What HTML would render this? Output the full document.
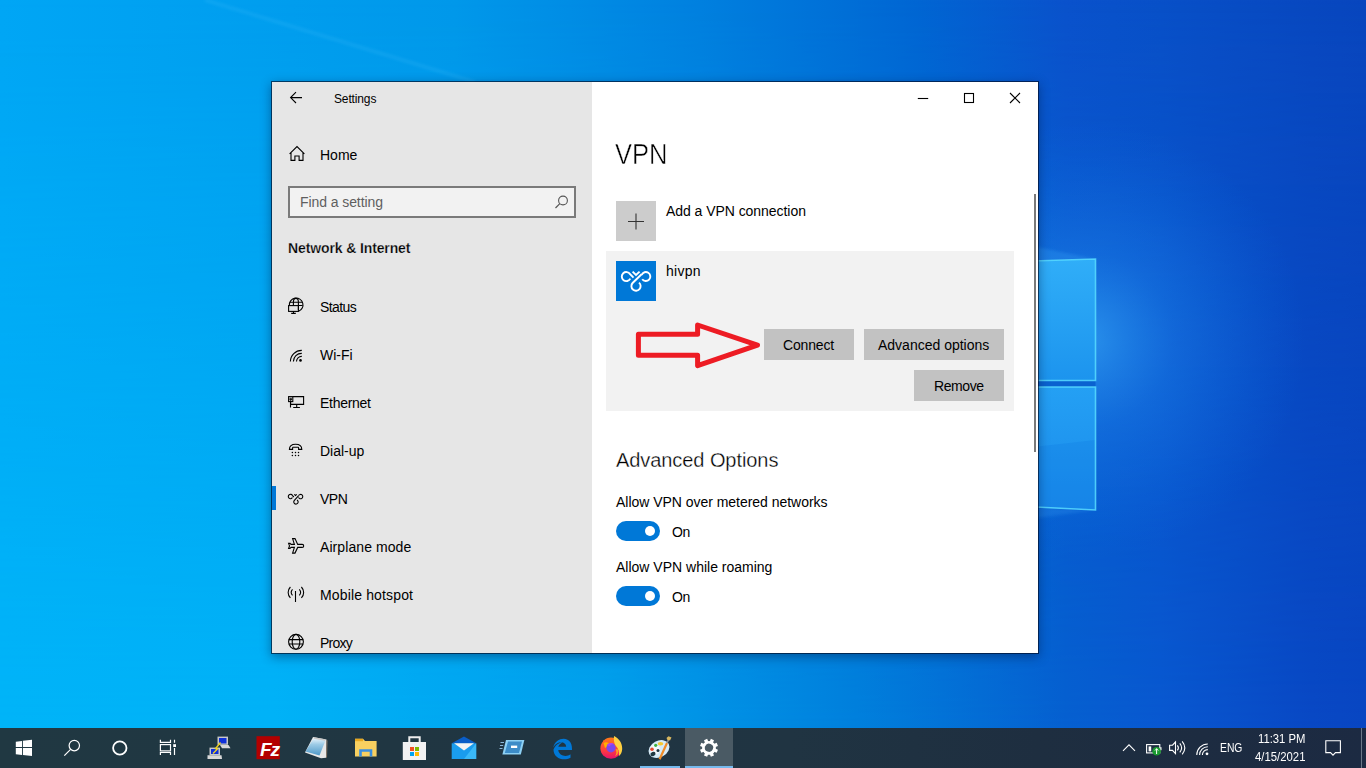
<!DOCTYPE html>
<html><head><meta charset="utf-8">
<style>
*{margin:0;padding:0;box-sizing:border-box}
html,body{width:1366px;height:768px;overflow:hidden}
body{position:relative;font-family:"Liberation Sans",sans-serif;color:#000;background:#0a8fe0}
.a{position:absolute}
svg{position:absolute;overflow:visible}
.t{position:absolute;white-space:nowrap;line-height:1;font-size:14px}
.s{font-size:12px;color:#fff}
#win{position:absolute;left:271px;top:81px;width:768px;height:573px;border:1px solid rgba(0,8,30,.62);background:#fff;background-clip:padding-box;box-shadow:0 3px 10px rgba(0,20,60,.42)}
#left{position:absolute;left:272px;top:82px;width:320px;height:571px;background:#e6e6e6}
#taskbar{position:absolute;left:0;top:728px;width:1366px;height:40px;background:linear-gradient(90deg,#203842 0%,#203442 58%,#1e2e40 76%,#1c2a42 100%)}
.btn{position:absolute;background:#c2c2c2;height:31px}
.tog{position:absolute;width:44px;height:20px;border-radius:10px;background:#0078d7}
.tog:after{content:"";position:absolute;left:29px;top:5px;width:10px;height:10px;border-radius:5px;background:#fff}
.ic{fill:none;stroke:#000;stroke-width:1.1}
.wi{fill:none;stroke:#fff;stroke-width:1.3}
</style></head>
<body>
<svg id="wall" style="left:0;top:0" width="1366" height="728" viewBox="0 0 1366 728">
 <defs>
  <linearGradient id="gtop" x1="0" y1="0" x2="1366" y2="0" gradientUnits="userSpaceOnUse">
   <stop offset="0" stop-color="#00a6f5"/><stop offset=".333" stop-color="#0098ea"/><stop offset=".5" stop-color="#0082e0"/>
   <stop offset=".66" stop-color="#0068d4"/><stop offset=".78" stop-color="#0a52cc"/><stop offset=".85" stop-color="#0850c8"/><stop offset=".96" stop-color="#0848c0"/><stop offset="1" stop-color="#0846be"/>
  </linearGradient>
  <linearGradient id="gbot" x1="0" y1="0" x2="1366" y2="0" gradientUnits="userSpaceOnUse">
   <stop offset="0" stop-color="#00b4f8"/><stop offset=".2" stop-color="#00b2f7"/><stop offset=".44" stop-color="#00a0ec"/><stop offset=".626" stop-color="#0080dc"/>
   <stop offset=".78" stop-color="#0560d0"/><stop offset=".85" stop-color="#0858d0"/><stop offset=".96" stop-color="#0848c4"/><stop offset="1" stop-color="#0846c2"/>
  </linearGradient>
  <linearGradient id="vm" x1="0" y1="0" x2="0" y2="1">
   <stop offset="0" stop-color="#fff" stop-opacity="0"/><stop offset="1" stop-color="#fff" stop-opacity="1"/>
  </linearGradient>
  <mask id="mk"><rect width="1366" height="728" fill="url(#vm)"/></mask>
  <radialGradient id="glow" cx="1085" cy="340" r="220" gradientUnits="userSpaceOnUse">
   <stop offset="0" stop-color="#40b8ff" stop-opacity=".6"/><stop offset=".4" stop-color="#2898f8" stop-opacity=".3"/><stop offset="1" stop-color="#1080f0" stop-opacity="0"/>
  </radialGradient>
  <linearGradient id="pane" x1="0" y1="0" x2="0" y2="1">
   <stop offset="0" stop-color="#30aef8"/><stop offset="1" stop-color="#1c94ee"/>
  </linearGradient>
  <linearGradient id="pane2" x1="0" y1="0" x2="0" y2="1">
   <stop offset="0" stop-color="#24a0f4"/><stop offset="1" stop-color="#1a8aea"/>
  </linearGradient>
  <filter id="bl" x="-20%" y="-20%" width="140%" height="140%"><feGaussianBlur stdDeviation="1.5"/></filter>
 </defs>
 <rect width="1366" height="728" fill="url(#gtop)"/>
 <rect width="1366" height="728" fill="url(#gbot)" mask="url(#mk)"/>
 <rect width="1366" height="728" fill="url(#glow)"/>
 <path d="M205 0 L475 82" stroke="#60d0ff" stroke-opacity=".16" stroke-width="3" filter="url(#bl)"/>
 <polygon points="880,215 1095.5,259 880,268" fill="#40b8ff" fill-opacity=".22" filter="url(#bl)"/>
 <polygon points="880,500 1095.5,510 880,540" fill="#40b8ff" fill-opacity=".18" filter="url(#bl)"/>
 <polygon points="900,265 1095.5,259 1095.5,380.5 900,380.5" fill="url(#pane)"/>
 <polygon points="900,387 1095.5,387 1095.5,510 900,500" fill="url(#pane2)"/>
 <polygon points="900,462 1095.5,440 1095.5,510 900,500" fill="#0a70e0" fill-opacity=".22"/>
 <path d="M900 380.5 H1095.5 V387 H900 Z" fill="#0a62d0"/>
 <path d="M900 265 L1095.5 259 V380.5 H900 M900 387 H1095.5 V510 L900 500" fill="none" stroke="#58dcff" stroke-opacity=".85" stroke-width="1.6"/>
</svg>

<div id="win"></div>
<div id="left"></div>

<!-- title bar -->
<svg style="left:284px;top:85px" width="24" height="24" viewBox="0 0 24 24"><path class="ic" d="M12 7.2 L6.6 12.6 L12 18 M6.6 12.6 H18"/></svg>
<div class="t m" style="left:334px;top:93px;font-size:12px;letter-spacing:-0.14px">Settings</div>
<svg style="left:912px;top:85px" width="24" height="24" viewBox="0 0 24 24"><path class="ic" d="M5.8 13.5 H16.2" stroke-width="1"/></svg>
<svg style="left:957px;top:85px" width="24" height="24" viewBox="0 0 24 24"><rect class="ic" x="7.5" y="8.5" width="9" height="9" stroke-width="1"/></svg>
<svg style="left:1003px;top:85px" width="24" height="24" viewBox="0 0 24 24"><path class="ic" d="M7 8 L17 18 M17 8 L7 18" stroke-width="1"/></svg>

<!-- home -->
<svg style="left:284px;top:142px" width="24" height="24" viewBox="0 0 24 24"><path class="ic" d="M5.6 11.8 L13 4.5 L20.4 11.8 M7 10.6 V18.4 H10.9 V14 H15.1 V18.4 H19 V10.6"/></svg>
<div class="t m" style="left:320px;top:148px">Home</div>

<!-- search -->
<div class="a" style="left:288px;top:186px;width:288px;height:32px;border:2px solid #7a7a7a;background:#f2f2f2"></div>
<div class="t m" style="left:300px;top:195px;color:#5f5f5f;letter-spacing:-0.08px">Find a setting</div>
<svg style="left:552px;top:192px" width="18" height="18" viewBox="0 0 18 18"><circle cx="11" cy="8.5" r="4.4" fill="none" stroke="#555" stroke-width="1.1"/><path d="M7.8 11.7 L3.5 16" stroke="#555" stroke-width="1.2"/></svg>

<div class="t m" style="left:288px;top:241px;font-weight:bold;letter-spacing:-0.12px;-webkit-text-stroke:.25px #e6e6e6">Network &amp; Internet</div>

<!-- nav icons -->
<svg style="left:284px;top:294px" width="24" height="24" viewBox="0 0 24 24"><g class="ic">
 <path d="M14.6 17.2 A6.8 6.8 0 1 0 5.4 11.4"/>
 <path d="M5.6 8.2 H18.6 M14.6 11.5 H18.6 M9.4 11.4 V8 C9.4 4.8 10.5 4.4 11.9 4.4 C13.3 4.4 14.4 4.8 14.4 8 V16"/>
 <rect x="4.6" y="11.6" width="9.8" height="5.8"/>
 <path d="M9.5 17.4 V19.4 M7.2 19.4 H11.8"/></g></svg>
<div class="t m" style="left:320px;top:300px;letter-spacing:-0.6px">Status</div>

<svg style="left:284px;top:342px" width="24" height="24" viewBox="0 0 24 24"><g class="ic">
 <path d="M6.4 19.6 A11.2 11.2 0 0 1 17.8 8.4"/>
 <path d="M9.4 19.6 A8.2 8.2 0 0 1 17.8 11.4"/>
 <path d="M12.5 19.6 A5.1 5.1 0 0 1 17.8 14.4"/></g>
 <circle cx="16.5" cy="18.4" r="1.3" fill="#000"/></svg>
<div class="t m" style="left:320px;top:348px">Wi-Fi</div>

<svg style="left:284px;top:390px" width="24" height="24" viewBox="0 0 24 24"><g class="ic">
 <path d="M8.8 6.6 H19.6 V14.4 H6.6 V11.6"/>
 <rect x="4.6" y="6.6" width="4.2" height="5"/>
 <path d="M5.6 8.2 H7.8 M5.6 9.2 L6.7 10.3 L7.8 9.2 M6.5 11.6 V17.6 M12.7 14.4 V17.4 M9.2 17.5 H15.9"/></g></svg>
<div class="t m" style="left:320px;top:396px;letter-spacing:-0.28px">Ethernet</div>

<svg style="left:284px;top:438px" width="24" height="24" viewBox="0 0 24 24"><g class="ic" stroke-width="1.2">
 <path d="M5.4 11.4 C5.4 7.6 8.4 6.2 11.6 6.2 C14.8 6.2 17.8 7.6 17.8 11.4 H14.6 V9.9 C14.6 9.5 14.4 9.3 14 9.3 H9.2 C8.8 9.3 8.6 9.5 8.6 9.9 V11.4 Z"/></g>
 <g fill="#000"><circle cx="8.4" cy="14.4" r="0.75"/><circle cx="11.5" cy="14.4" r="0.75"/><circle cx="14.5" cy="14.4" r="0.75"/><circle cx="8.4" cy="17.4" r="0.75"/><circle cx="11.5" cy="17.4" r="0.75"/><circle cx="14.5" cy="17.4" r="0.75"/></g></svg>
<div class="t m" style="left:320px;top:444px">Dial-up</div>

<div class="a" style="left:272px;top:486px;width:4px;height:24px;background:#0078d7"></div>
<svg style="left:284px;top:486px" width="24" height="24" viewBox="0 0 24 24"><g class="ic" stroke-width="1.05">
 <path d="M8.4 11.6 A2.2 2.2 0 1 1 8.5 9.6 L9.9 11"/><path d="M14.6 9.6 A2.2 2.2 0 1 1 14.5 11.4"/><path d="M14.6 9.6 L10.2 14.6 A2.2 2.2 0 1 0 13 14"/>
 <path d="M10.3 8.3 L11.5 9.5 L12.7 8.3"/></g></svg>
<div class="t m" style="left:320px;top:492px;letter-spacing:-0.5px">VPN</div>

<svg style="left:284px;top:534px" width="24" height="24" viewBox="0 0 24 24"><g class="ic" stroke-width="1.2">
 <path d="M8.6 4.6 H11 L13.7 10.4 H18.2 C19.2 10.4 19.7 11.1 19.7 11.9 C19.7 12.7 19.2 13.4 18.2 13.4 H13.7 L11 19.1 H8.6 L10.4 13.4 H7.1 L6 14.4 H4.6 L5.5 11.9 L4.6 9.4 H6 L7.1 10.4 H10.4 Z"/></g></svg>
<div class="t m" style="left:320px;top:540px;letter-spacing:0.08px">Airplane mode</div>

<svg style="left:284px;top:582px" width="24" height="24" viewBox="0 0 24 24"><g class="ic" stroke-width="1.2">
 <path d="M6.4 5 C3.4 8.2 3.4 12.6 6.4 15.8 M17.4 5 C20.4 8.2 20.4 12.6 17.4 15.8 M8.5 7.4 C6.9 9.2 6.9 11.6 8.5 13.4 M15.3 7.4 C16.9 9.2 16.9 11.6 15.3 13.4 M11.5 9 V20"/></g></svg>
<div class="t m" style="left:320px;top:588px;letter-spacing:0.15px">Mobile hotspot</div>

<svg style="left:284px;top:630px" width="24" height="24" viewBox="0 0 24 24"><g class="ic" stroke-width="1.2">
 <circle cx="12" cy="11.8" r="7.4"/><ellipse cx="12" cy="11.8" rx="3.8" ry="7.4"/><path d="M4.8 9.6 H19.2 M4.8 14 H19.2"/></g></svg>
<div class="t m" style="left:320px;top:636px;letter-spacing:-0.75px">Proxy</div>

<!-- right pane -->
<div class="t m" style="left:615px;top:140px;font-size:29px;transform:scaleX(.88);transform-origin:0 0;-webkit-text-stroke:.5px #fff">VPN</div>
<div class="a" style="left:616px;top:201px;width:40px;height:40px;background:#cccccc"></div>
<svg style="left:616px;top:201px" width="40" height="40" viewBox="0 0 40 40"><path d="M20 12.5 V28.5 M12 20.5 H28" stroke="#333" stroke-width="1.1"/></svg>
<div class="t m" style="left:666px;top:204px;letter-spacing:-0.05px">Add a VPN connection</div>

<div class="a" style="left:606px;top:251px;width:408px;height:160px;background:#f2f2f2"></div>
<div class="a" style="left:616px;top:261px;width:40px;height:40px;background:#0078d7"></div>
<svg style="left:612px;top:257px" width="48" height="48" viewBox="0 0 48 48"><g fill="none" stroke="#fff" stroke-width="1.9">
 <path d="M18.3 21.6 A4.5 4.5 0 1 1 18.1 17.2 L21.5 20.6"/>
 <path d="M29.7 17.8 A4.5 4.5 0 1 1 30.2 22.2 M29.6 17.3 L20.6 26 A4.6 4.6 0 1 0 27 25.6"/>
 <path d="M20.6 14.6 L24 18 L27.6 14.6"/></g></svg>
<div class="t m" style="left:666px;top:264px;letter-spacing:0.25px">hivpn</div>

<div class="btn" style="left:764px;top:329px;width:90px"></div>
<div class="t m" style="left:783px;top:338px;letter-spacing:-0.17px">Connect</div>
<div class="btn" style="left:864px;top:329px;width:140px"></div>
<div class="t m" style="left:878px;top:338px">Advanced options</div>
<div class="btn" style="left:914px;top:370px;width:90px"></div>
<div class="t m" style="left:934px;top:379px;letter-spacing:-0.4px">Remove</div>

<svg style="left:0;top:0" width="1366" height="768"><path d="M638.4 334.3 H697.6 V325 L757.5 345.2 L697.6 365.7 V355.2 H638.4 Z" fill="none" stroke="#ed1c24" stroke-width="5" stroke-linejoin="round"/></svg>

<div class="t m" style="left:616px;top:450px;font-size:20px;-webkit-text-stroke:.3px #fff;letter-spacing:-0.07px">Advanced Options</div>
<div class="t m" style="left:616px;top:495px;letter-spacing:-0.03px">Allow VPN over metered networks</div>
<div class="tog" style="left:616px;top:521px"></div>
<div class="t m" style="left:672px;top:525px;letter-spacing:-0.4px">On</div>
<div class="t m" style="left:616px;top:560px">Allow VPN while roaming</div>
<div class="tog" style="left:616px;top:586px"></div>
<div class="t m" style="left:672px;top:590px;letter-spacing:-0.4px">On</div>
<div class="a" style="left:1034px;top:194px;width:2px;height:258px;background:#7a7a7a"></div>

<!-- taskbar -->
<div id="taskbar"></div>
<div class="a" style="left:685px;top:728px;width:48px;height:40px;background:#4a5a64"></div>
<div class="a" style="left:685px;top:766px;width:48px;height:2px;background:#76b9ed"></div>
<div class="a" style="left:640px;top:766px;width:40px;height:2px;background:#76b9ed"></div>
<svg style="left:0;top:728px" width="1366" height="40" viewBox="0 0 1366 40">
 <!-- start -->
 <g fill="#fff">
  <polygon points="15.8,13.8 22,12.9 22,18.9 15.8,18.9"/>
  <polygon points="22.9,12.7 32,11.8 32,18.9 22.9,18.9"/>
  <polygon points="15.8,20 22,20 22,27 15.8,26.2"/>
  <polygon points="22.9,20 32,20 32,28 22.9,27.1"/>
 </g>
 <!-- search -->
 <g fill="none" stroke="#fff" stroke-width="1.2">
  <circle cx="74.3" cy="17.6" r="5.2"/><path d="M70.6 21.3 L64.3 27.6"/>
 </g>
 <!-- cortana -->
 <circle cx="119.8" cy="20" r="6.7" fill="none" stroke="#fff" stroke-width="1.8"/>
 <!-- task view -->
 <g fill="none" stroke="#fff" stroke-width="1.2">
  <path d="M160.4 11.8 V14.3 H170.5 V11.8"/>
  <rect x="160.4" y="16.6" width="10.1" height="6.3"/>
  <path d="M160.4 27.1 V24.5 H170.5 V27.1"/>
  <path d="M174.5 11.8 V14.8 M174.5 20 V27.1"/>
 </g>
 <rect x="173.2" y="16.2" width="2.8" height="2.8" fill="#fff"/>
 <!-- network pcs -->
 <g>
  <rect x="217.5" y="8.6" width="10.5" height="8.2" fill="#c8c8c8"/><rect x="219" y="10" width="7.5" height="5.5" fill="#1030d8"/>
  <polygon points="220,17 228.5,17 230.5,20.3 222,20.3" fill="#d8d8d8"/>
  <rect x="209.5" y="19.6" width="10.5" height="7.6" fill="#c8c8c8"/><rect x="211" y="21" width="7.5" height="5" fill="#1030d8"/>
  <polygon points="207.5,27.2 221.5,27.2 222,31 207.5,31" fill="#d8d8d8"/>
  <path d="M220.5 14.5 L215.5 20.5 L217.5 21 L213 25.5" fill="none" stroke="#f0d020" stroke-width="1.4"/>
 </g>
 <!-- filezilla -->
 <rect x="256.5" y="8.2" width="23.3" height="23" fill="#b30000"/>
 <text x="260" y="28" font-family="Liberation Sans" font-weight="bold" font-style="italic" font-size="19" fill="#fff" letter-spacing="-1">Fz</text>
 <!-- notepad -->
 <defs>
  <linearGradient id="npg" x1="0" y1="0" x2="0" y2="1"><stop offset="0" stop-color="#e4f2fa"/><stop offset=".35" stop-color="#9ccbe6"/><stop offset="1" stop-color="#4e98c8"/></linearGradient>
  <linearGradient id="ffg" x1="0" y1="0" x2="0" y2="1"><stop offset="0" stop-color="#ff7a18"/><stop offset=".6" stop-color="#ff3d3d"/><stop offset="1" stop-color="#e6106e"/></linearGradient>
 </defs>
 <polygon points="313,9 326.5,11.5 326,29.8 321,30.2 305,24.5" fill="#e8e8e8"/>
 <polygon points="326.5,12 327.5,12.5 327,29.5 326,29.8" fill="#8a7a6a"/>
 <polygon points="313.5,10.5 325.5,12.5 319.5,27.5 305.5,23.5" fill="url(#npg)"/>
 <path d="M314 10 L325 12" stroke="#c8c8c8" stroke-width="1.4"/>
 <!-- folder -->
 <polygon points="355,10.8 363,10.8 365,13 376.6,13 376.6,28.6 355,28.6" fill="#f8d060"/>
 <rect x="355" y="10.8" width="8" height="2.4" fill="#e8a820"/>
 <path d="M360.5 28.6 V22.5 H371 V28.6" fill="none" stroke="#3a8ee0" stroke-width="2.6"/>
 <!-- store -->
 <path d="M409.3 14 V9.2 H419.7 V14" fill="none" stroke="#eee" stroke-width="2"/>
 <rect x="402.8" y="14" width="23.2" height="18" fill="#f2f2f2"/>
 <rect x="410" y="19" width="4" height="4" fill="#f25022"/><rect x="415" y="19" width="4" height="4" fill="#7fba00"/>
 <rect x="410" y="24" width="4" height="4" fill="#00a4ef"/><rect x="415" y="24" width="4" height="4" fill="#ffb900"/>
 <!-- mail -->
 <polygon points="451.7,15.3 464,8.5 476.2,15.3" fill="#0a5ec8"/>
 <rect x="451.7" y="15.3" width="24.5" height="15.7" fill="#1a9cee"/>
 <polygon points="476.2,15.3 476.2,31 464,31" fill="#3ab8f8"/>
 <polygon points="454,15.3 474,15.3 464,22.5" fill="#f4f4f4"/>
 <!-- remote -->
 <polygon points="506,12 524.4,12 520.8,26.6 502.4,26.6" fill="#8cd0f4"/>
 <polygon points="508,13.6 522,13.6 519,25 504.8,25" fill="#3c8cc8"/>
 <rect x="511" y="17.6" width="6.2" height="2.4" fill="#fff"/>
 <path d="M500.5 14.5 H504 M500 17.5 H503.2 M499.5 20.5 H502.5" stroke="#8cb8d8" stroke-width="1"/>
 <!-- edge -->
 <path d="M553.3 19.5 C555 11 566 7.5 570.5 14.5 C572 17 572 20 572 22 H558.3 C558.8 28 566.5 29.5 570.5 26.3 V29.8 C563.5 33.5 553.5 30.5 553.5 21.5 C556 15.5 561 14.5 562.7 14.3 C559 16.2 558.4 18.5 558.4 18.8 H566.2 C566 13 557 12.5 553.3 19.5 Z" fill="#0078d7"/>
 <!-- firefox -->
 <path d="M603.4 11.8 L605 15 L606.5 12 L608 15.5 C605 17 603 19.5 602.5 22 Z" fill="#ff8a20"/>
 <circle cx="611" cy="20.2" r="10.6" fill="url(#ffg)"/>
 <path d="M614 7.9 C619 10.5 622.5 15 622.2 21 C622 24.5 620.8 26.5 619 28 C619.5 24 618.5 20 615.5 17.5 C614 15 613.5 11 614 7.9 Z" fill="#ffd040"/>
 <path d="M617.5 21 C619 24 618 27 615 28.5 C617 25.5 616.5 23 615.5 21.5 Z" fill="#ffa020"/>
 <path d="M603.5 15 C606 13.5 609 14.5 610.5 17 L605 20 Z" fill="#ffb000"/>
 <circle cx="611" cy="19.8" r="4.6" fill="#7a48ee"/>
 <path d="M607 17 C608.5 14.8 612 14.6 614 16 C612 16 610 17 609.5 18.5 Z" fill="#b040f0"/>
 <!-- paint -->
 <ellipse cx="659" cy="21" rx="11" ry="8.2" fill="#d6ebf8" transform="rotate(-28 659 21)"/>
 <ellipse cx="655" cy="21.5" rx="5" ry="5" fill="#f4f8fb"/>
 <ellipse cx="653" cy="26" rx="2.6" ry="2" fill="#203842" transform="rotate(-20 653 26)"/>
 <circle cx="658" cy="22.6" r="1.5" fill="#1e3440"/>
 <ellipse cx="660.5" cy="15.8" rx="2.8" ry="1.8" fill="#f6c830"/>
 <circle cx="655.7" cy="17.3" r="1.6" fill="#40b040"/>
 <circle cx="652" cy="21.3" r="1.8" fill="#e84a30"/>
 <path d="M659.6 31.3 L667 15" stroke="#f08c28" stroke-width="2.2"/>
 <path d="M667 15 L669 10.5" stroke="#909090" stroke-width="1.6"/>
 <polygon points="666.5,10 668.5,8.3 671.5,9.5 670,12.5 667.5,12" fill="#d8b860"/>
 <!-- settings gear -->
 <g transform="translate(709 19.8) rotate(22.5)">
  <g fill="#fff">
   <rect x="-1.7" y="-9" width="3.4" height="18"/>
   <rect x="-1.7" y="-9" width="3.4" height="18" transform="rotate(45)"/>
   <rect x="-1.7" y="-9" width="3.4" height="18" transform="rotate(90)"/>
   <rect x="-1.7" y="-9" width="3.4" height="18" transform="rotate(135)"/>
  </g>
  <circle r="5.6" fill="none" stroke="#fff" stroke-width="2.6"/>
  <circle r="4.1" fill="#4a5a64"/>
 </g>
 <!-- tray -->
 <g fill="none" stroke="#fff" stroke-width="1.1">
  <path d="M1123 22.8 L1129 16.8 L1135 22.8"/>
  <rect x="1146.6" y="16.6" width="13.2" height="8.3"/>
  <path d="M1169.6 17.2 H1172.5 L1175.5 14 V25.6 L1172.5 22.4 H1169.6 Z"/>
  <path d="M1177.4 17.3 C1178.6 18.8 1178.6 20.8 1177.4 22.3 M1179.8 15.3 C1182 18 1182 21.6 1179.8 24.3 M1182.2 13.3 C1185.4 17.3 1185.4 22.3 1182.2 26.3"/>
  <path d="M1196.8 27 A11 11 0 0 1 1207.8 16 M1199.6 27 A8.2 8.2 0 0 1 1207.8 18.8 M1202.4 27 A5.4 5.4 0 0 1 1207.8 21.6"/>
  <path d="M1325.8 12.7 H1340.4 V24.6 H1335.5 L1333 27.2 L1330.5 24.6 H1325.8 Z"/>
 </g>
 <rect x="1148.6" y="18.4" width="2.6" height="5" fill="#fff"/>
 <rect x="1160.2" y="19.2" width="1.3" height="3" fill="#fff"/>
 <circle cx="1156.6" cy="23.3" r="4.3" fill="#1a9a30"/>
 <path d="M1156.6 20.5 V26 M1155 22.5 L1156.6 20.8 L1158.2 22.5" stroke="#fff" stroke-width="1" fill="none"/>
 <circle cx="1207" cy="25.8" r="1.4" fill="#fff"/>
 <rect x="1361" y="0" width="1" height="40" fill="#6a7888"/>
</svg>
<div class="t m s" style="left:1258px;top:733px;transform:scaleX(.94);transform-origin:0 0">11:31 PM</div>
<div class="t m s" style="left:1255px;top:751px;transform:scaleX(.945);transform-origin:0 0">4/15/2021</div>
<div class="t m s" style="left:1220px;top:742px;transform:scaleX(.86);transform-origin:0 0">ENG</div>
</body></html>
